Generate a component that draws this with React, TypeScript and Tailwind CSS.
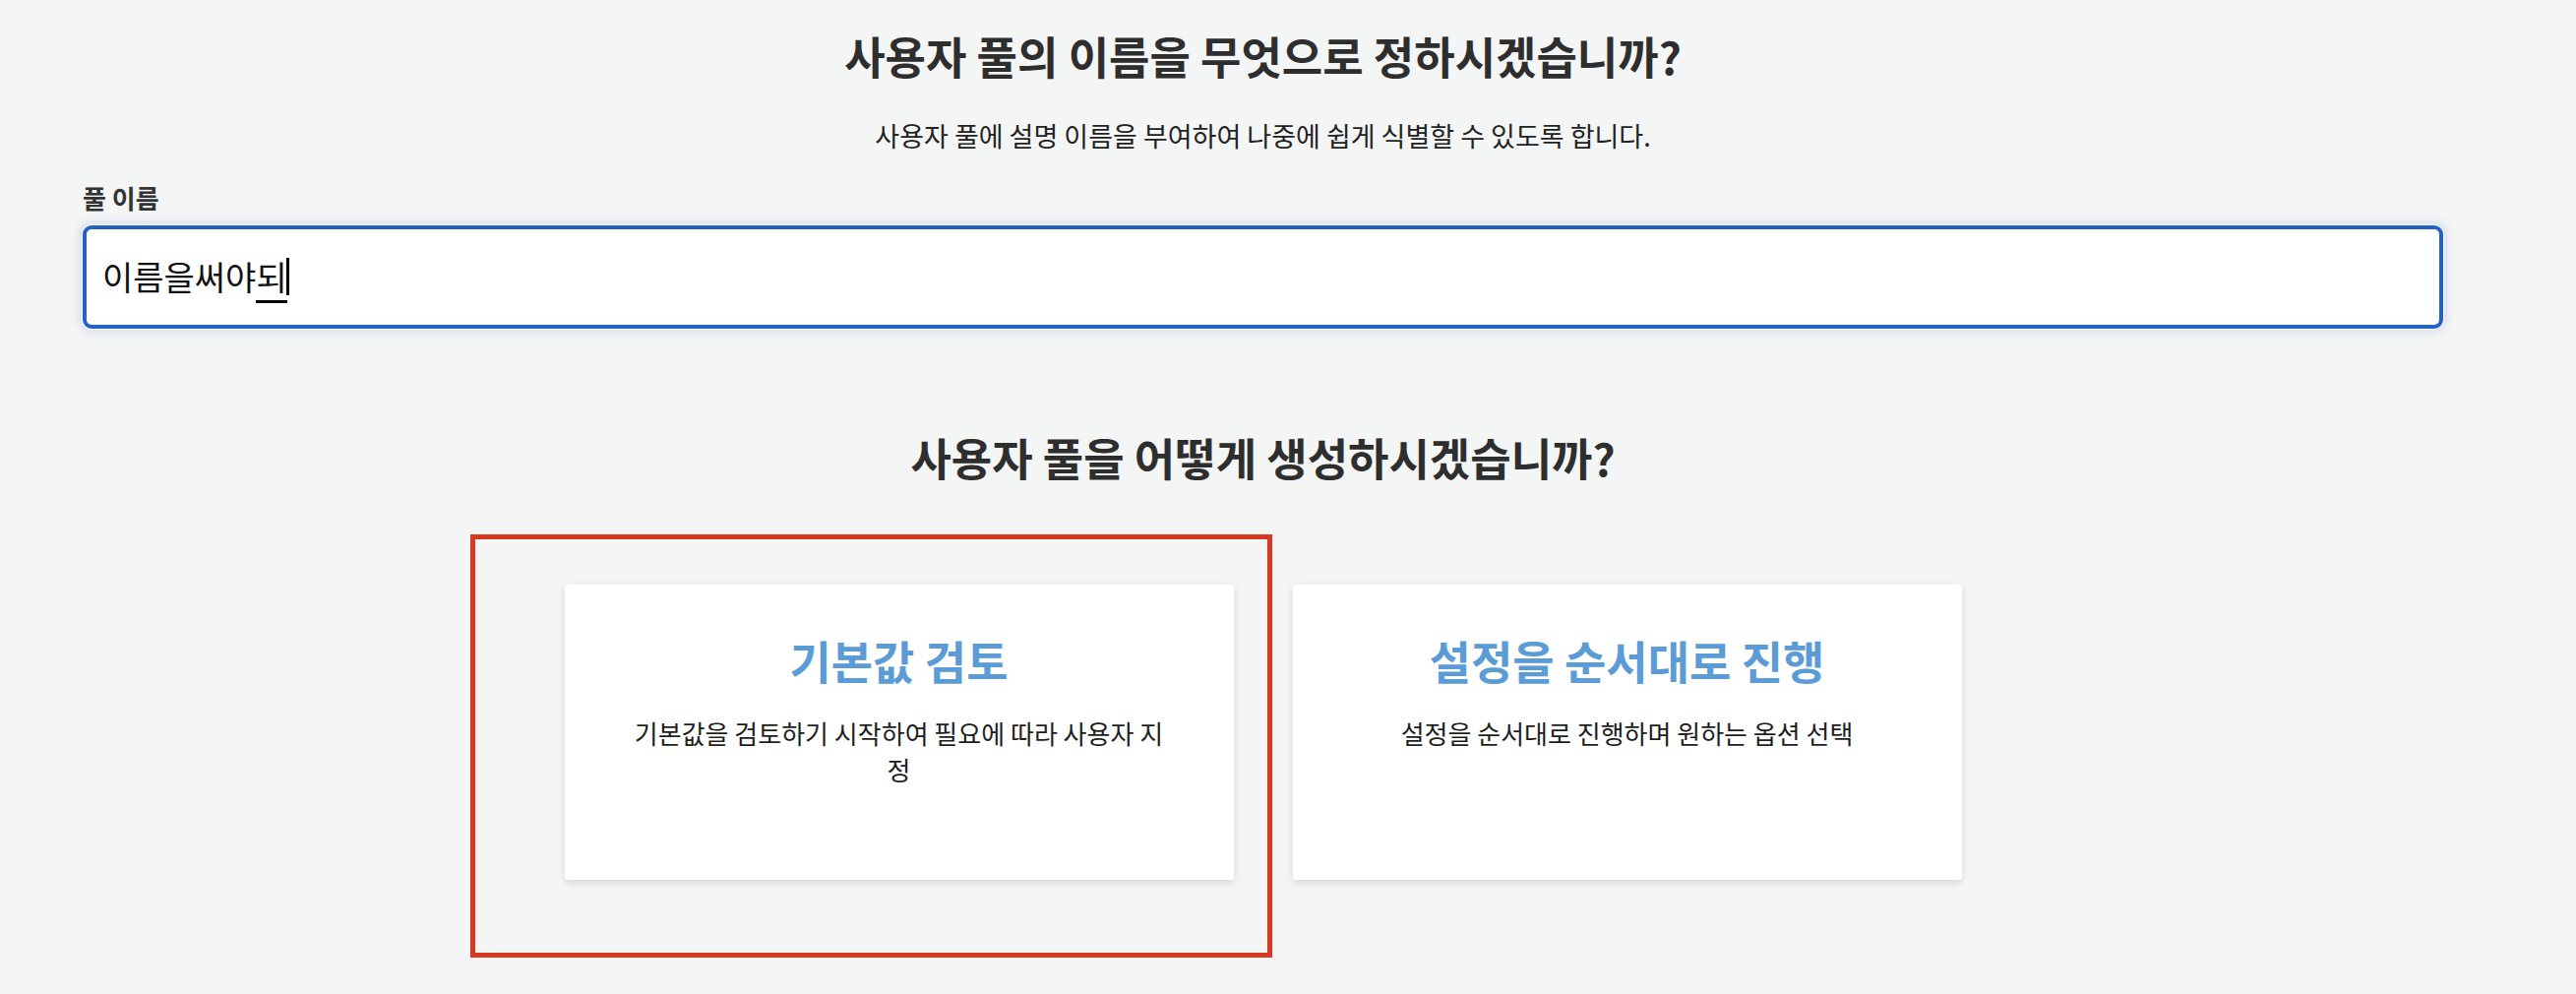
import React from "react";

const FONT = { fontFamily: '"Noto Sans CJK KR", "Noto Sans", sans-serif' };

function Card({ title, desc, children }: { title: string; desc: string; children?: React.ReactNode }) {
  return (
    <div className="relative w-[680px] h-[300px] bg-white rounded-[3px] shadow-[0_3px_8px_rgba(0,0,0,0.12)] pt-[49px] flex flex-col items-center text-center">
      <div className="text-[46px] leading-[1.2] font-bold text-[#5b9bd6]">{title}</div>
      <p className="mt-[28px] w-[548px] text-[26px] leading-[37px] text-[#1e1e1e]">{desc}</p>
      {children}
    </div>
  );
}

export default function App() {
  return (
    <div className="w-[2618px] h-[1010px] bg-[#f4f5f5] overflow-hidden" style={FONT}>
      <div className="ml-[83px] w-[2401px] pt-[30px]">
        <h1 className="text-center text-[45px] leading-[1.2] font-bold text-[#2e2e2e]">
          사용자 풀의 이름을 무엇으로 정하시겠습니까?
        </h1>
        <p className="mt-[38px] text-center text-[27px] leading-[1.2] text-[#222]">
          사용자 풀에 설명 이름을 부여하여 나중에 쉽게 식별할 수 있도록 합니다.
        </p>
        <label className="block mt-[31px] text-[26px] leading-[1.2] font-bold text-[#333] pl-[1px]">
          풀 이름
        </label>
        <div className="mt-[12px] mx-[1px] h-[105px] rounded-[9px] border-[4px] border-[#2462c6] bg-white shadow-[0_0_0_1px_#ffffff,0_0_10px_3px_rgba(60,110,200,0.18)] flex items-center pl-[16px]">
          <span className="text-[34px] leading-none text-[#111]">
            이름을써야<span className="border-b-[3px] border-black">되</span>
          </span>
          <span className="-ml-[1px] w-[3px] h-[38px] bg-black" />
        </div>
        <h2 className="mt-[104px] text-center text-[45px] leading-[1.2] font-bold text-[#2e2e2e]">
          사용자 풀을 어떻게 생성하시겠습니까?
        </h2>
        <div className="mt-[102px] flex justify-center gap-[60px]">
          <Card title="기본값 검토" desc="기본값을 검토하기 시작하여 필요에 따라 사용자 지정">
            <div className="absolute -left-[96px] -top-[51px] w-[815px] h-[430px] border-[5px] border-[#d6391f] pointer-events-none" />
          </Card>
          <Card title="설정을 순서대로 진행" desc="설정을 순서대로 진행하며 원하는 옵션 선택" />
        </div>
      </div>
    </div>
  );
}
